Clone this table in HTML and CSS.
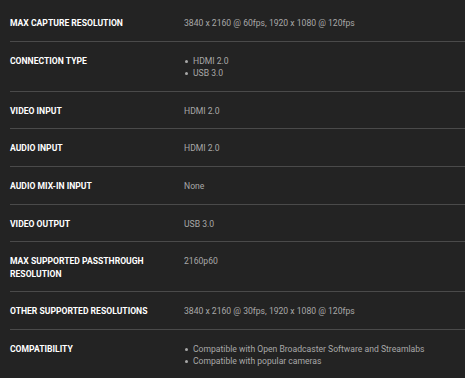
FILE: index.html
```html
<!DOCTYPE html>
<html lang="en">
<head>
    <meta charset="UTF-8">
    <meta name="viewport" content="width=device-width, initial-scale=1.0">
    <title>Tech Specs</title>
    <link rel="stylesheet" href="styles.css">
</head>
<body>
    <div class="specs">
        <div class="spec-row">
            <div class="spec-label">Max Capture Resolution</div>
            <div class="spec-value">3840 x 2160 @ 60fps, 1920 x 1080 @ 120fps</div>
        </div>
        <div class="spec-row">
            <div class="spec-label">Connection Type</div>
            <ul class="spec-value spec-list">
                <li>HDMI 2.0</li>
                <li>USB 3.0</li>
            </ul>
        </div>
        <div class="spec-row">
            <div class="spec-label">Video Input</div>
            <div class="spec-value">HDMI 2.0</div>
        </div>
        <div class="spec-row">
            <div class="spec-label">Audio Input</div>
            <div class="spec-value">HDMI 2.0</div>
        </div>
        <div class="spec-row">
            <div class="spec-label">Audio Mix-In Input</div>
            <div class="spec-value">None</div>
        </div>
        <div class="spec-row">
            <div class="spec-label">Video Output</div>
            <div class="spec-value">USB 3.0</div>
        </div>
        <div class="spec-row">
            <div class="spec-label">Max Supported Passthrough Resolution</div>
            <div class="spec-value">2160p60</div>
        </div>
        <div class="spec-row">
            <div class="spec-label">Other Supported Resolutions</div>
            <div class="spec-value">3840 x 2160 @ 30fps, 1920 x 1080 @ 120fps</div>
        </div>
        <div class="spec-row">
            <div class="spec-label">Compatibility</div>
            <ul class="spec-value spec-list">
                <li>Compatible with Open Broadcaster Software and Streamlabs</li>
                <li>Compatible with popular cameras</li>
            </ul>
        </div>
    </div>
</body>
</html>
```

FILE: styles.css
```css
:root {
    --background-color: #232323;
    --label-color: #ffffff;
    --value-color: #a8a8a8;
    --divider-color: #4a4a4a;
}

body {
    font-family: 'Roboto', sans-serif;
    font-size: 8.6px;
    line-height: 12.3px;
    background-color: var(--background-color);
    margin: 0;
    padding: 0;
    overflow: hidden;
}

.specs {
    padding: 4px 0 0 10px;
}

.spec-row {
    display: grid;
    grid-template-columns: 174px 1fr;
    padding: 13px 0 11.4px;
    border-bottom: 1px solid var(--divider-color);
}

.spec-label {
    color: var(--label-color);
    font-weight: 700;
    text-transform: uppercase;
    padding-right: 20px;
}

.spec-value {
    color: var(--value-color);
}

.spec-list {
    list-style: none;
    margin: 0;
    padding: 0;
}

.spec-list li {
    position: relative;
    padding-left: 9px;
}

.spec-list li::before {
    content: "";
    position: absolute;
    left: 1px;
    top: 5px;
    width: 3px;
    height: 3px;
    border-radius: 50%;
    background-color: var(--value-color);
}
```
